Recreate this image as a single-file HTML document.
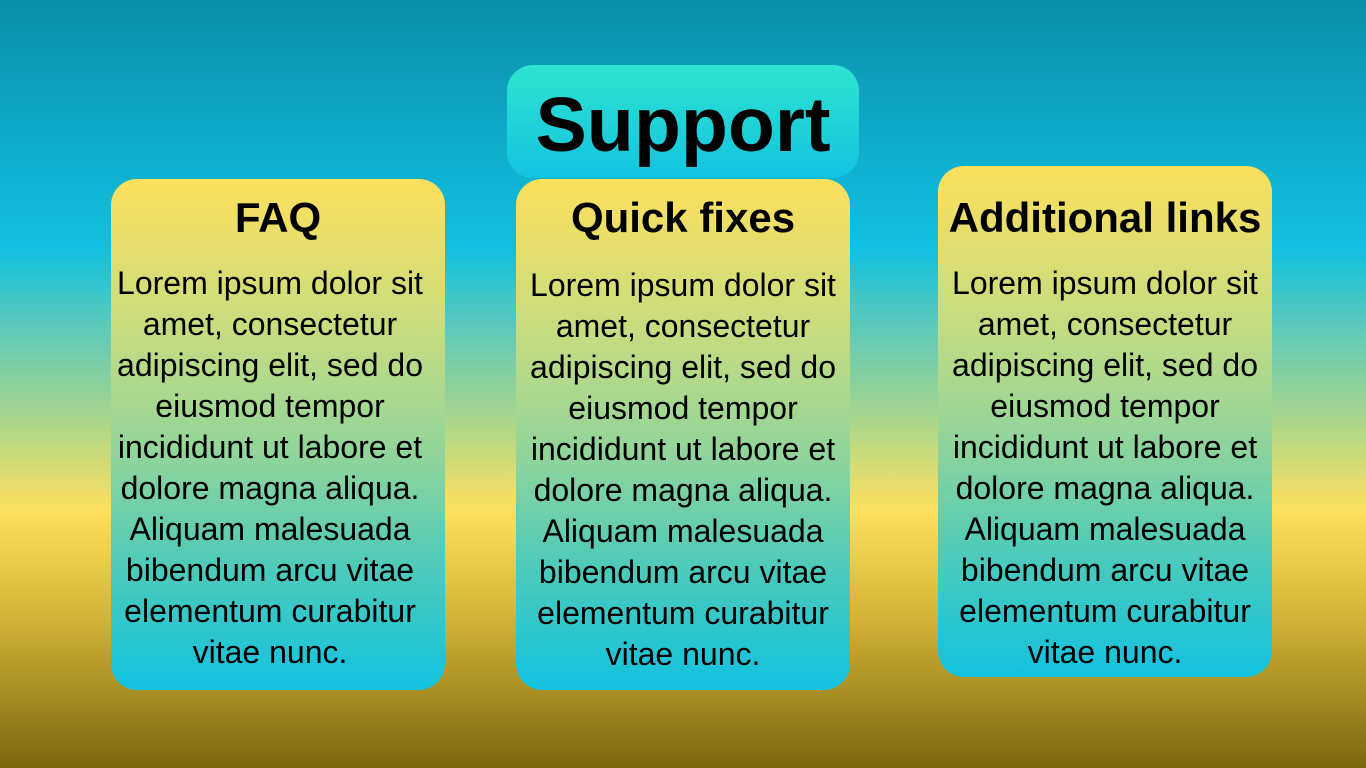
<!DOCTYPE html>
<html><head><meta charset="utf-8"><style>
html,body{margin:0;padding:0}
body{width:1366px;height:768px;position:relative;overflow:hidden;
background:linear-gradient(to bottom,#0b90aa 0px,#0fa9c8 130px,#12c0e0 250px,#5fcab8 330px,#a9d68c 420px,#fde05e 510px,#dcbb3c 600px,#a48a20 700px,#7c650f 768px);
font-family:"Liberation Sans",sans-serif;color:#000}
.sup{position:absolute;left:507px;top:65px;width:352px;height:113px;border-radius:26px;
background:linear-gradient(to bottom,#2ee3d0,#12c4e0);}
.sup div{position:absolute;left:0;right:0;top:60px;line-height:0;text-align:center;font-weight:bold;font-size:77px}
.card{position:absolute;width:334px;border-radius:26px;
background:linear-gradient(to bottom,#fde05c 0%,#c6dc80 30%,#8ed49c 55%,#50cbb8 75%,#12c2e0 100%);}
.card h2{position:absolute;left:-20px;right:-20px;margin:0;text-align:center;font-size:42px;font-weight:bold;line-height:44px}
.card p{position:absolute;left:-20px;right:-20px;margin:0;text-align:center;font-size:32px;line-height:41px}
</style></head><body>
<div class="sup"><div>Support</div></div>

<div class="card" style="left:111px;top:179px;height:511px">
<h2 style="top:17px">FAQ</h2>
<p style="top:84px;right:-4px">Lorem ipsum dolor sit<br>amet, consectetur<br>adipiscing elit, sed do<br>eiusmod tempor<br>incididunt ut labore et<br>dolore magna aliqua.<br>Aliquam malesuada<br>bibendum arcu vitae<br>elementum curabitur<br>vitae nunc.</p>
</div>

<div class="card" style="left:516px;top:179px;height:511px">
<h2 style="top:17px">Quick fixes</h2>
<p style="top:86px">Lorem ipsum dolor sit<br>amet, consectetur<br>adipiscing elit, sed do<br>eiusmod tempor<br>incididunt ut labore et<br>dolore magna aliqua.<br>Aliquam malesuada<br>bibendum arcu vitae<br>elementum curabitur<br>vitae nunc.</p>
</div>

<div class="card" style="left:938px;top:166px;height:511px">
<h2 style="top:30px">Additional links</h2>
<p style="top:97px">Lorem ipsum dolor sit<br>amet, consectetur<br>adipiscing elit, sed do<br>eiusmod tempor<br>incididunt ut labore et<br>dolore magna aliqua.<br>Aliquam malesuada<br>bibendum arcu vitae<br>elementum curabitur<br>vitae nunc.</p>
</div>
</body></html>
